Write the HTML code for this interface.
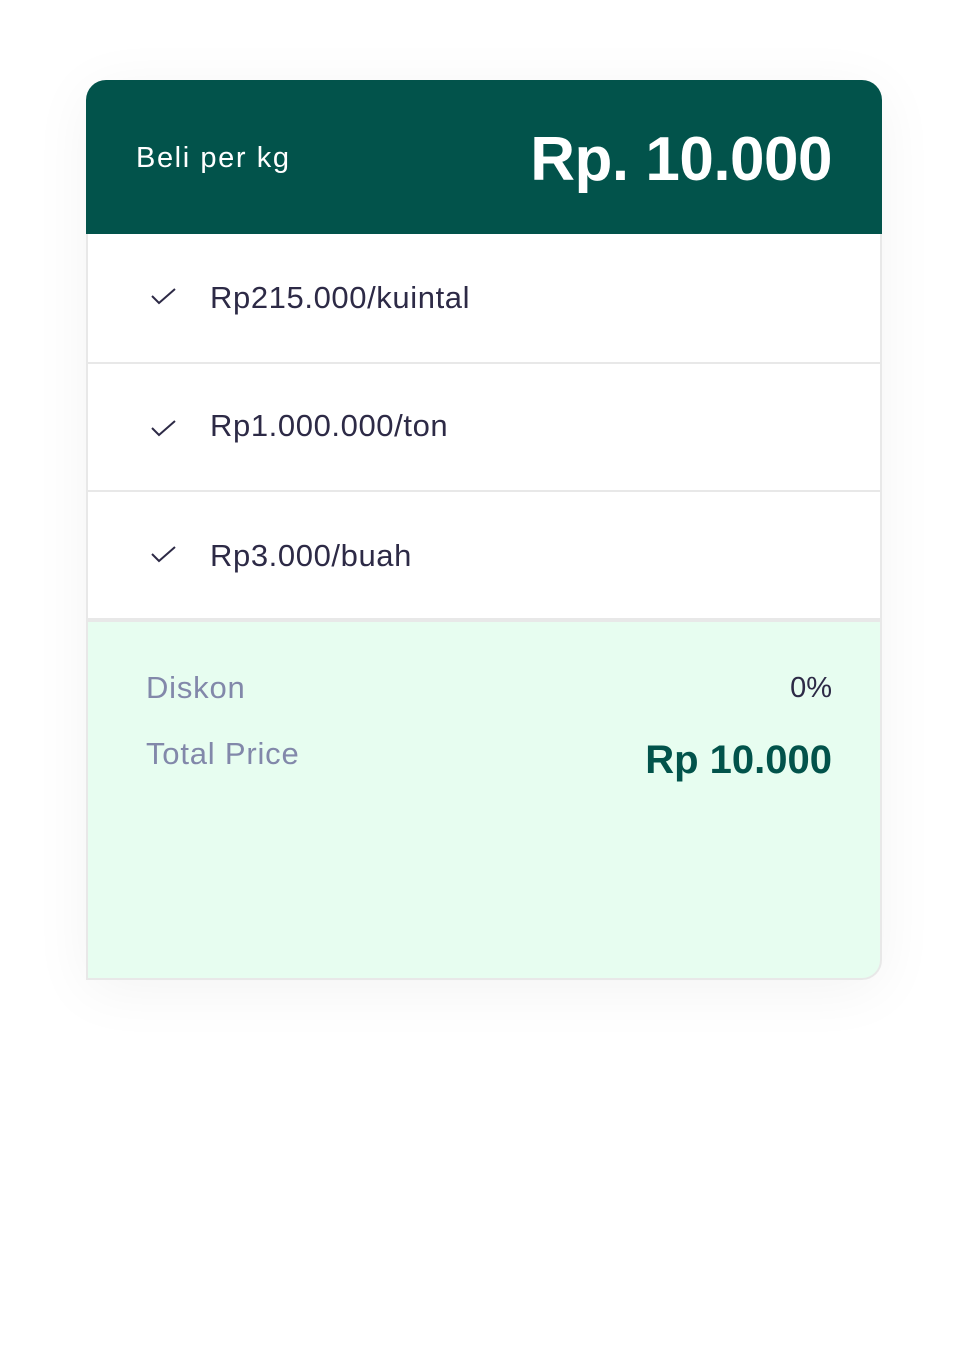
<!DOCTYPE html>
<html><head><meta charset="utf-8"><style>
*{margin:0;padding:0;box-sizing:border-box}
body{width:972px;height:1348px;background:#fff;font-family:"Liberation Sans",sans-serif;position:relative;overflow:hidden}
.card{position:absolute;left:86px;top:80px;width:796px;height:900px;border-radius:20px 20px 20px 0;box-shadow:0 10px 60px rgba(0,0,0,0.05);background:#fff}
.head{position:absolute;left:0;top:0;width:796px;height:154px;background:#02534b;border-radius:20px 20px 0 0;color:#fff}
.head .l{position:absolute;left:50px;top:62px;font-size:29px;letter-spacing:1.6px}
.head .r{position:absolute;right:50px;top:44px;font-size:62px;font-weight:bold;letter-spacing:-0.5px}
.row{position:absolute;left:0;width:796px;height:128px;border:2px solid #e8e8e8;border-top:none;background:#fff}
.row svg{position:absolute;left:62px;top:52px}
.row span{position:absolute;left:122px;top:46px;font-size:31px;letter-spacing:0.6px;color:#2d2a46}
.foot{position:absolute;left:0;top:540px;width:796px;height:360px;background:#e7fdf0;border:2px solid #e8e8e8;border-radius:0 0 20px 0}
.foot .a{position:absolute;left:58px;font-size:31px;color:#8288aa;letter-spacing:0.8px}
.foot .b{position:absolute;right:48px}
</style></head><body>
<div class="card">
<div class="head"><div class="l">Beli per kg</div><div class="r">Rp. 10.000</div></div>
<div class="row" style="top:154px;height:130px"><svg width="28" height="20" viewBox="0 0 28 20"><path d="M2 10 L9 17 L25 3" fill="none" stroke="#2d2a46" stroke-width="2"/></svg><span>Rp215.000/kuintal</span></div>
<div class="row" style="top:284px"><svg width="28" height="20" viewBox="0 0 28 20" style="top:54px"><path d="M2 10 L9 17 L25 3" fill="none" stroke="#2d2a46" stroke-width="2"/></svg><span style="top:44px">Rp1.000.000/ton</span></div>
<div class="row" style="top:412px"><svg width="28" height="20" viewBox="0 0 28 20" style="top:52px"><path d="M2 10 L9 17 L25 3" fill="none" stroke="#2d2a46" stroke-width="2"/></svg><span style="top:46px">Rp3.000/buah</span></div>
<div class="foot">
<div class="a" style="top:48px">Diskon</div>
<div class="a" style="top:114px">Total Price</div>
<div class="b" style="top:50px;font-size:29px;color:#2d2a46">0%</div>
<div class="b" style="top:116px;font-size:40px;font-weight:bold;color:#02534b">Rp 10.000</div>
</div>
</div>
</body></html>
